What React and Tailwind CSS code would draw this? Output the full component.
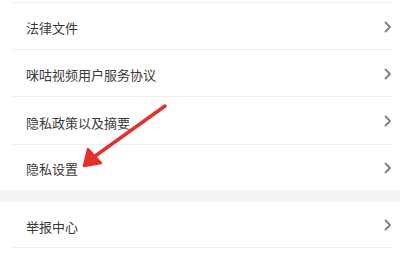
import React from "react";

const Chevron = () => (
  <svg width="8" height="12" viewBox="0 0 8 12" className="shrink-0">
    <path d="M1.5 1.5 L6 6 L1.5 10.5" fill="none" stroke="#7f7f7f" strokeWidth="1.8" strokeLinecap="round" strokeLinejoin="round" />
  </svg>
);

const Row = ({ label, h, border = true }) => (
  <div className={`flex items-center pl-[26px] pr-[8px] ${h} relative`}>
    <span className="flex-1 text-[13px] text-[#3a3a3a] leading-none pt-[2px]">{label}</span>
    <Chevron />
    {border && <div className="absolute left-[12px] right-[8px] bottom-0 h-px bg-[#efefef]" />}
  </div>
);

export default function App() {
  return (
    <div
      className="relative w-[400px] h-[254px] bg-white overflow-hidden"
      style={{ fontFamily: '"Noto Sans CJK SC", "Noto Sans", sans-serif' }}
    >
      <div className="h-[3px] relative">
        <div className="absolute left-[12px] right-[8px] bottom-0 h-px bg-[#efefef]" />
      </div>
      <Row label="法律文件" h="h-[47px]" />
      <Row label="咪咕视频用户服务协议" h="h-[47px]" />
      <Row label="隐私政策以及摘要" h="h-[48px]" />
      <Row label="隐私设置" h="h-[45px]" border={false} />
      <div className="h-[12px] bg-[#f5f5f5]" />
      <Row label="举报中心" h="h-[46px]" />
      <svg className="absolute left-0 top-0" width="400" height="254" viewBox="0 0 400 254">
        <line x1="165" y1="106" x2="91" y2="159" stroke="#e5302c" strokeWidth="3.5" strokeLinecap="round" />
        <path d="M84 166 L88 149 L101 163 Z" fill="#e5302c" stroke="#e5302c" strokeWidth="2.5" strokeLinejoin="round" />
      </svg>
    </div>
  );
}
